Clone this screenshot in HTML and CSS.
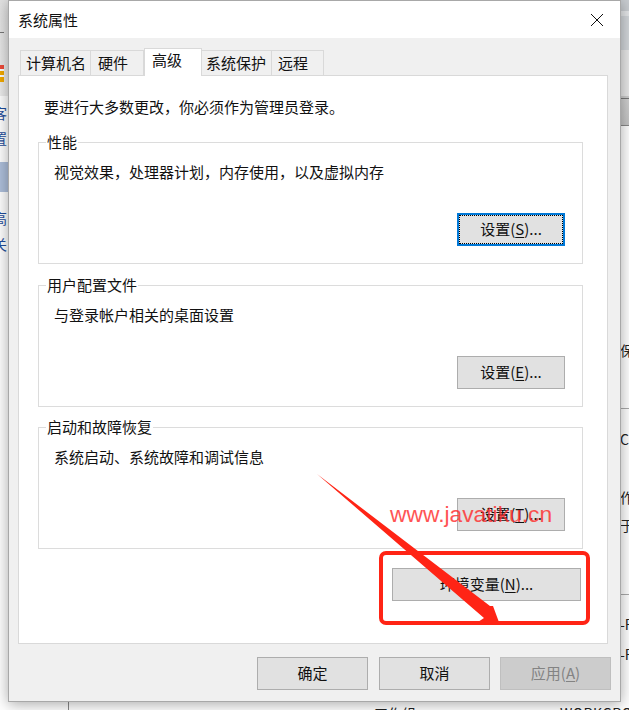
FILE: index.html
```html
<!DOCTYPE html>
<html lang="zh-CN">
<head>
<meta charset="utf-8">
<title>系统属性</title>
<link rel="stylesheet" href="styles.css">
</head>
<body>
<div class="desktop">
  <div class="bg-list">
    <div class="bg-strip-left"></div>
    <div class="bg-strip-right"></div>
    <div class="bg-dash"></div>
    <div class="bg-orange"></div>
    <div class="bg-item bg-a">客</div>
    <div class="bg-item bg-b">置</div>
    <div class="bg-sel"></div>
    <div class="bg-item bg-c">高</div>
    <div class="bg-item bg-d">关</div>
    <div class="bg-rt rt-a">保</div>
    <div class="bg-rt rt-b">Co</div>
    <div class="bg-rt rt-c">作</div>
    <div class="bg-rt rt-d">于</div>
    <div class="bg-rt rt-e">-R</div>
    <div class="bg-rt rt-f">-R</div>
    <div class="bg-line l3"></div>
    <div class="bg-line l4"></div>
    <div class="bg-vline"></div>
    <div class="bg-bottom b1">工作组</div>
    <div class="bg-bottom b2">WORKGROUP</div>
  </div>

  <section class="dialog">
    <header class="titlebar">
      <span class="title">系统属性</span>
      <svg class="close" width="14" height="14" viewBox="0 0 14 14"><path d="M1 1 13 13M13 1 1 13" stroke="#111" stroke-width="1" fill="none"/></svg>
    </header>
    <div class="body">
      <nav class="tabs">
        <span class="tab t1">计算机名</span>
        <span class="tab t2">硬件</span>
        <span class="tab active">高级</span>
        <span class="tab t4">系统保护</span>
        <span class="tab t5">远程</span>
      </nav>
      <div class="panel">
        <p class="notice">要进行大多数更改，你必须作为管理员登录。</p>
        <div class="group g1">
          <span class="legend">性能</span>
          <p class="desc">视觉效果，处理器计划，内存使用，以及虚拟内存</p>
          <div class="group-foot"><button class="btn set focused"><span class="focus-ring">设置(<u>S</u>)...</span></button></div>
        </div>
        <div class="group g2">
          <span class="legend">用户配置文件</span>
          <p class="desc">与登录帐户相关的桌面设置</p>
          <div class="group-foot"><button class="btn set">设置(<u>E</u>)...</button></div>
        </div>
        <div class="group g3">
          <span class="legend">启动和故障恢复</span>
          <p class="desc">系统启动、系统故障和调试信息</p>
          <div class="group-foot"><button class="btn set">设置(<u>T</u>)...</button></div>
        </div>
        <div class="env-row"><button class="btn env">环境变量(<u>N</u>)...</button></div>
      </div>
      <footer class="actions">
        <button class="btn act ok">确定</button>
        <button class="btn act">取消</button>
        <button class="btn act disabled">应用(<u>A</u>)</button>
      </footer>
    </div>
  </section>

  <div class="red-box"></div>
  <svg class="arrow" width="629" height="710" viewBox="0 0 629 710"><path d="M317 474 L490 606 L493 606 L500 625 L478 622 L484 618 Z" fill="#ff2415"/></svg>
  <div class="watermark">www.javatiku.cn</div>
</div>
</body>
</html>
```
FILE: styles.css
```css
* { box-sizing: border-box; }
html, body { margin: 0; padding: 0; }
body { width: 629px; height: 710px; overflow: hidden; background: #fff; font-family: "Noto Sans CJK SC", "Liberation Sans", sans-serif; font-size: 15px; color: #111; }
.desktop { position: relative; width: 629px; height: 710px; overflow: hidden; }

.bg-list { position: absolute; inset: 0; background: #fff; }
.bg-strip-left { position: absolute; left: 0; top: 0; width: 8px; height: 96px; background: linear-gradient(#e2e2e2, #ececec); }
.bg-strip-right { position: absolute; left: 621px; top: 0; width: 8px; height: 126px; background: linear-gradient(#c9cdd1 0 11px, #e4e6e8 11px 16px, #d2d6da 16px 50px, #e8e8e8 50px 96px, #ccc 96px 98px, #777 98px 99px, #d0d0d0 99px, #c4c4c4 125px, #888 125px); }
.bg-dash { position: absolute; left: 0; top: 32px; width: 4px; height: 1px; background: #777; }
.bg-orange { position: absolute; left: 0; top: 65px; width: 4px; height: 17px; background: linear-gradient(#ef4b3a 0 4px, #fff 4px 6px, #f2a900 6px 10px, #fff 10px 12px, #f2a900 12px); }
.bg-sel { position: absolute; left: 0; top: 162px; width: 9px; height: 30px; background: #aebfdb; }
.bg-item { position: absolute; left: -7px; font-size: 14px; line-height: 18px; color: #1f4e9c; }
.bg-a { top: 104px; }
.bg-b { top: 129px; }
.bg-c { top: 209px; }
.bg-d { top: 235px; }
.bg-rt { position: absolute; left: 620px; font-size: 14px; line-height: 18px; color: #222; white-space: nowrap; }
.rt-a { top: 341px; }
.rt-b { top: 430px; }
.rt-c { top: 488px; }
.rt-d { top: 516px; }
.rt-e { top: 615px; }
.rt-f { top: 645px; }
.bg-line { position: absolute; left: 620px; width: 9px; height: 1px; background: #aaa; }
.l3 { top: 408px; }
.l4 { top: 594px; }
.bg-vline { position: absolute; left: 68px; top: 702px; width: 1px; height: 8px; background: #888; }
.bg-bottom { position: absolute; top: 704px; font-size: 14px; line-height: 18px; color: #222; white-space: nowrap; }
.b1 { left: 374px; }
.b2 { left: 560px; letter-spacing: .5px; }

.dialog { position: absolute; left: 8px; top: 0; width: 613px; height: 702px; display: flex; flex-direction: column; background: #f0f0f0; border: 1px solid #a8a8a8; box-shadow: 0 2px 14px rgba(0,0,0,.35); }
.titlebar { height: 37px; flex: none; display: flex; align-items: center; justify-content: space-between; padding: 0 16px 0 9px; background: #fff; }
.title { font-size: 15px; line-height: 20px; }
.close { display: block; }
.body { flex: 1; display: flex; flex-direction: column; padding: 11px 12px 0 9px; }

.tabs { display: flex; height: 26px; margin-left: 2px; align-items: flex-end; position: relative; z-index: 1; }
.tab { height: 25px; line-height: 24px; font-size: 15px; background: #f0f0f0; border: 1px solid #d9d9d9; border-bottom: 0; border-left-width: 0; white-space: nowrap; }
.t1 { width: 71px; border-left-width: 1px; padding-left: 5px; }
.t2 { width: 53px; padding-left: 7px; }
.t4 { width: 70px; padding-left: 4px; }
.t5 { width: 52px; padding-left: 6px; }
.tab.active { width: 58px; height: 28px; margin-bottom: -1px; background: #fff; border-left-width: 1px; padding-left: 7px; line-height: 22px; }

.panel { width: 590px; height: 569px; flex: none; background: #fff; border: 1px solid #d9d9d9; padding: 20px 25px 0 19px; display: flex; flex-direction: column; }
.notice { margin: 0 0 22px 6px; font-size: 15px; line-height: 22px; height: 24px; }
.group { width: 545px; height: 122px; flex: none; padding: 19px 17px 17px 15px; border: 1px solid #dcdcdc; display: flex; flex-direction: column; position: relative; }
.g1 { margin-bottom: 21px; }
.g2 { margin-bottom: 20px; }
.legend { position: absolute; left: 7px; top: -10px; padding: 0 1px; background: #fff; font-size: 15px; line-height: 18px; white-space: nowrap; }
.desc { margin: 0; font-size: 15px; line-height: 20px; height: 20px; }
.group-foot { margin-top: auto; display: flex; justify-content: flex-end; }

.btn { display: flex; align-items: center; justify-content: center; margin: 0; padding: 0 0 2px; font-family: inherit; font-size: 15px; color: #111; background: #e1e1e1; border: 1px solid #adadad; }
.btn u { text-underline-offset: 2px; }
.set { width: 108px; height: 33px; }
.focused { border: 2px solid #0078d7; padding: 0; }
.focus-ring { display: flex; align-items: center; justify-content: center; width: 100%; height: 100%; padding-bottom: 2px; border: 1px dotted #000; }
.env-row { margin-top: 19px; display: flex; justify-content: flex-end; padding-right: 1px; }
.env { width: 189px; height: 33px; }
.actions { display: flex; gap: 10px; justify-content: flex-end; margin-top: 13px; margin-right: -3px; }
.act { width: 111px; height: 33px; }
.ok { margin-right: 1px; }
.disabled { background: #ccc; border-color: #bfbfbf; color: #838383; }

.red-box { position: absolute; left: 379px; top: 551px; width: 211px; height: 74px; border: 4px solid #ff2415; border-radius: 7px; }
.arrow { position: absolute; left: 0; top: 0; pointer-events: none; }
.watermark { position: absolute; left: 390px; top: 500px; font-family: "Liberation Sans", sans-serif; font-size: 22.8px; line-height: 28px; color: #ff2a2a; opacity: .8; white-space: nowrap; }
```
